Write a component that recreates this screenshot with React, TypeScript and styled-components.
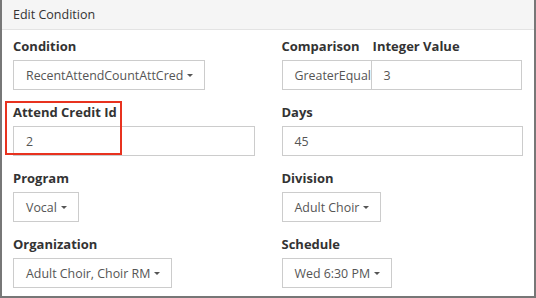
import styled, { createGlobalStyle } from "styled-components";

const GlobalStyle = createGlobalStyle`
  body {
    margin: 0;
    font-family: "Open Sans", "Liberation Sans", sans-serif;
    background: #fff;
  }
`;

const Panel = styled.div`
  position: relative;
  width: 536px;
  height: 298px;
  box-sizing: border-box;
  border: 2px solid #777;
  border-top: none;
  background: #fff;
`;

const Heading = styled.div`
  height: 30px;
  box-sizing: border-box;
  display: flex;
  align-items: center;
  padding: 0 11px;
  background: #f5f5f5;
  border-bottom: 1px solid #e3e3e3;
  color: #333;
  font-size: 12.5px;
`;

const Body = styled.div`
  display: grid;
  grid-template-columns: 1fr 1fr;
  column-gap: 27px;
  row-gap: 13px;
  padding: 7px 11px 0 11px;
`;

const Field = styled.div`
  display: flex;
  flex-direction: column;
  align-items: flex-start;
`;

const Label = styled.label`
  display: block;
  height: 18px;
  line-height: 18px;
  margin-bottom: 5px;
  font-size: 13px;
  font-weight: 700;
  color: #333;
  white-space: nowrap;
`;

const Control = styled.div<{ $wide?: boolean; $clip?: boolean }>`
  height: 30px;
  box-sizing: border-box;
  display: flex;
  align-items: center;
  width: ${(p) => (p.$wide ? "100%" : "auto")};
  padding: ${(p) => (p.$clip ? "0 0 0 12px" : "0 11px 0 12px")};
  border: 1px solid #ccc;
  background: #fff;
  color: #555;
  font-size: 12.4px;
  white-space: nowrap;
  overflow: hidden;
`;

const Caret = styled.span`
  display: inline-block;
  width: 0;
  height: 0;
  margin-left: 4px;
  margin-top: 1px;
  border-top: 3px solid #555;
  border-left: 3px solid transparent;
  border-right: 3px solid transparent;
`;

const Pair = styled.div`
  display: grid;
  grid-template-columns: 90px 1fr;
  width: 100%;

  & > :last-child {
    margin-left: -1px;
  }
`;

const PairLabels = styled.div`
  display: flex;
  gap: 13px;
`;

const Highlight = styled.div`
  position: absolute;
  left: 3px;
  top: 101px;
  width: 117px;
  height: 54px;
  box-sizing: border-box;
  border: 2px solid #e8321f;
  pointer-events: none;
`;

function Dropdown({ text }: { text: string }) {
  return (
    <Control>
      {text}
      <Caret />
    </Control>
  );
}

export default function App() {
  return (
    <>
      <GlobalStyle />
      <Panel>
        <Heading>Edit Condition</Heading>
        <Body>
          <Field>
            <Label>Condition</Label>
            <Dropdown text="RecentAttendCountAttCred" />
          </Field>
          <Field>
            <PairLabels>
              <Label>Comparison</Label>
              <Label>Integer Value</Label>
            </PairLabels>
            <Pair>
              <Control $clip>GreaterEqual</Control>
              <Control $wide>3</Control>
            </Pair>
          </Field>
          <Field>
            <Label>Attend Credit Id</Label>
            <Control $wide>2</Control>
          </Field>
          <Field>
            <Label>Days</Label>
            <Control $wide>45</Control>
          </Field>
          <Field>
            <Label>Program</Label>
            <Dropdown text="Vocal" />
          </Field>
          <Field>
            <Label>Division</Label>
            <Dropdown text="Adult Choir" />
          </Field>
          <Field>
            <Label>Organization</Label>
            <Dropdown text="Adult Choir, Choir RM" />
          </Field>
          <Field>
            <Label>Schedule</Label>
            <Dropdown text="Wed 6:30 PM" />
          </Field>
        </Body>
        <Highlight />
      </Panel>
    </>
  );
}
